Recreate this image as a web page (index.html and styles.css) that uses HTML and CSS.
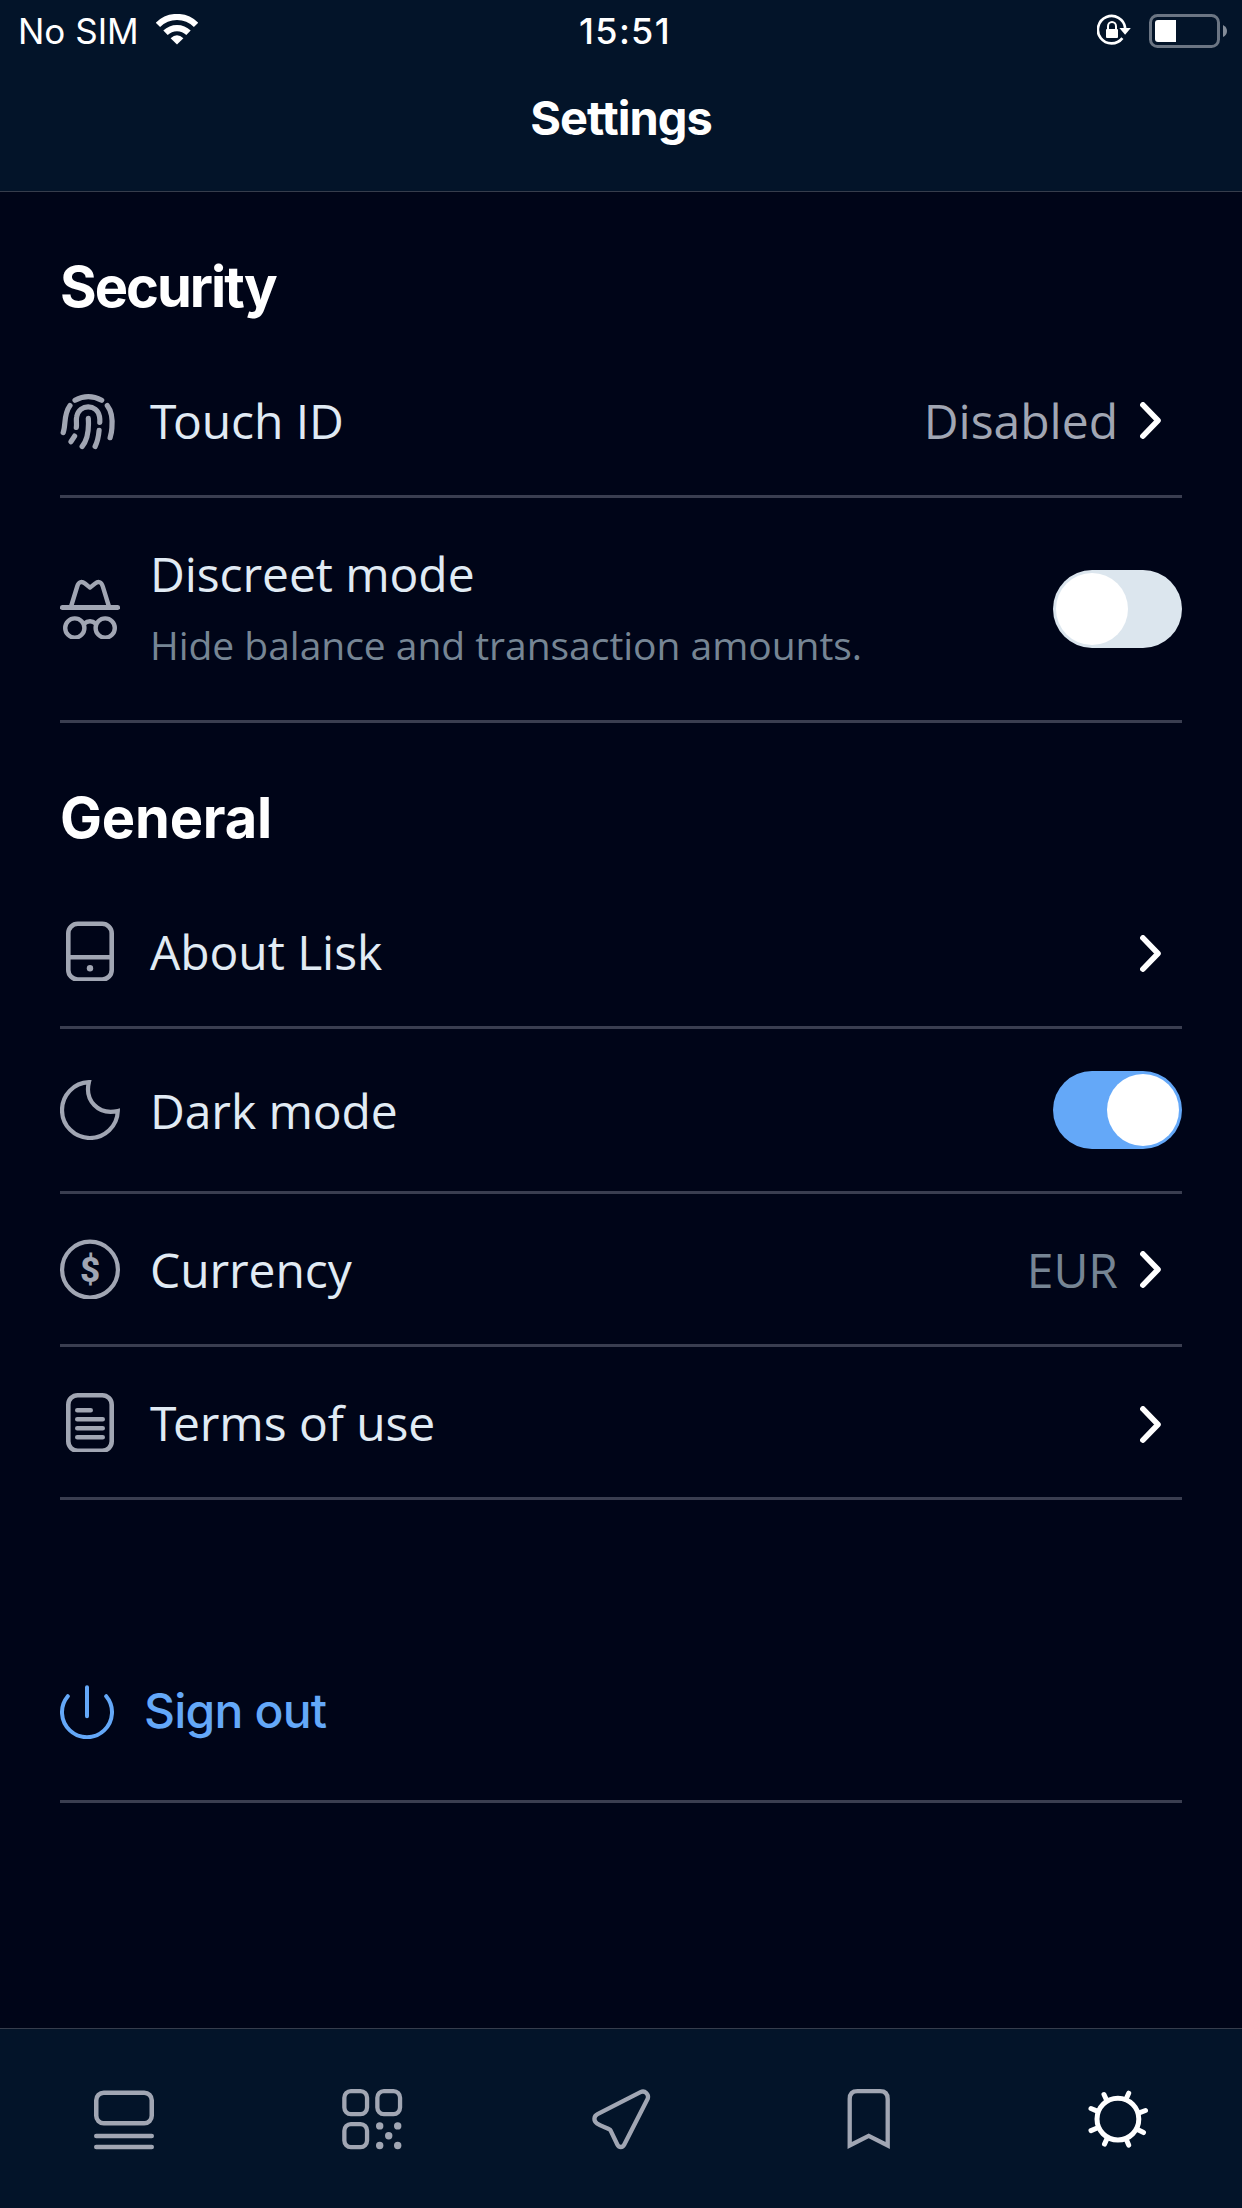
FILE: index.html
```html
<!DOCTYPE html>
<html lang="en">
<head>
<meta charset="utf-8">
<title>Settings</title>
<link rel="stylesheet" href="styles.css">
</head>
<body>
<div class="screen">
  <header class="header">
    <div class="status">
      <div class="status-left">
        <span class="carrier">No SIM</span>
        <svg class="wifi" width="42" height="31" viewBox="0 0 42 31" fill="none" stroke="currentColor">
          <path d="M1.9 10.9A27 27 0 0 1 40.1 10.9" stroke-width="6.2"/>
          <path d="M9.5 18.8A16.3 16.3 0 0 1 32.5 18.8" stroke-width="6.2"/>
          <path d="M14.6 24.2Q21 18.4 27.4 24.2L21 30.4Z" fill="currentColor" stroke="none"/>
        </svg>
      </div>
      <span class="clock">15:51</span>
      <div class="status-right">
        <svg class="lock" width="36" height="32" viewBox="0 0 36 32" fill="none" stroke="currentColor">
          <path d="M28.2 14A13.7 13.7 0 1 0 25.4 24.2" stroke-width="2.7"/>
          <path d="M22.4 14h11.4l-5.7 6.7z" fill="currentColor" stroke="none"/>
          <rect x="9" y="15" width="12" height="9" rx="1" fill="currentColor" stroke="none"/>
          <path d="M11 15.5v-3.2a4 4.3 0 0 1 8 0v3.2" stroke-width="2"/>
        </svg>
        <svg class="battery" width="78" height="34" viewBox="0 0 78 34" fill="none">
          <rect x="1.5" y="1.5" width="68" height="31" rx="7" stroke="#6b7583" stroke-width="3"/>
          <path d="M74 11q4 2 4 6t-4 6z" fill="#848c98"/>
          <path d="M9 6h18v22H9q-3 0-3-3V9q0-3 3-3z" fill="#fff"/>
        </svg>
      </div>
    </div>
    <h1 class="title">Settings</h1>
  </header>

  <main class="content">
    <section>
      <h2 class="section-title section-title-security">Security</h2>
      <div class="row">
        <svg class="icon" viewBox="0 0 60 60" fill="none" stroke="currentColor" stroke-width="5.2" stroke-linecap="round">
          <path d="M15 10.3Q28.3 2.8 41.7 10.3"/>
          <path d="M10 15.6C3.2 25 6.2 34 3.2 42.6"/>
          <path d="M47.3 15.6Q53.2 23 51.9 38Q51.6 43 50.1 47.7"/>
          <path d="M16.3 37.4C17 34 15.8 30 16.7 26.6C19.3 13.8 37 13.5 39.5 26.6Q40 29.5 39.8 32.4"/>
          <path d="M28.3 28.4C29 39 28.5 49 22.1 56.5"/>
          <path d="M39.1 40.4Q38.3 50 35.1 56.5"/>
          <path d="M14.6 46.1L11 51.7"/>
        </svg>
        <span class="label"><span class="kern">T</span>ouch ID</span>
        <span class="value value-state">Disabled</span>
        <svg class="chevron" viewBox="0 0 21 37"><path d="M2.9 2.9L18 18.5L2.9 34.1"/></svg>
      </div>
      <div class="row row-tall">
        <svg class="icon" viewBox="0 0 60 60" fill="none" stroke="currentColor" stroke-width="4.4" stroke-linecap="round" stroke-linejoin="round">
          <path d="M2.4 28.4H57.6" stroke-width="5"/>
          <path d="M11.2 27L17.2 7.5C18.6 2.6 21.6 2 25 4.6L30 8.6L35 4.6C38.4 2 41.4 2.6 42.8 7.5L48.8 27"/>
          <circle cx="14.8" cy="49" r="9.6"/>
          <circle cx="45.2" cy="49" r="9.6"/>
          <path d="M24 44.7Q30 39.7 36 44.7"/>
        </svg>
        <div class="copy">
          <span class="label">Discreet mode</span>
          <span class="hint">Hide balance and transaction amounts.</span>
        </div>
        <span class="toggle"></span>
      </div>
    </section>

    <section>
      <h2 class="section-title section-title-general">General</h2>
      <div class="row">
        <svg class="icon" viewBox="0 0 60 60" fill="none" stroke="currentColor" stroke-width="4.6">
          <rect x="8.3" y="2.8" width="43.4" height="55.7" rx="9.5"/>
          <path d="M8 36.2H52"/>
          <circle cx="30" cy="47.2" r="3.2" fill="currentColor" stroke="none"/>
        </svg>
        <span class="label">About Lisk</span>
        <svg class="chevron chevron-alone" viewBox="0 0 21 37"><path d="M2.9 2.9L18 18.5L2.9 34.1"/></svg>
      </div>
      <div class="row row-dark">
        <svg class="icon" viewBox="0 0 60 60" fill="none" stroke="currentColor" stroke-width="4.2">
          <path d="M28.9 2.2A27.9 27.9 0 1 0 57.8 31C38 35.5 24.5 20 28.9 2.2Z"/>
        </svg>
        <span class="label">Dark mode</span>
        <span class="toggle toggle-on"></span>
      </div>
      <div class="row">
        <svg class="icon" viewBox="0 0 60 60" fill="none" stroke="currentColor" stroke-width="4.2">
          <circle cx="30" cy="30.6" r="27.9"/>
          <text class="dollar" x="30.2" y="43.2" text-anchor="middle">$</text>
        </svg>
        <span class="label">Currency</span>
        <span class="value">EUR</span>
        <svg class="chevron" viewBox="0 0 21 37"><path d="M2.9 2.9L18 18.5L2.9 34.1"/></svg>
      </div>
      <div class="row">
        <svg class="icon" viewBox="0 0 60 60" fill="none" stroke="currentColor" stroke-width="4.6" stroke-linecap="round">
          <rect x="8.3" y="3.2" width="43.4" height="55.6" rx="9.5"/>
          <path d="M17.3 18.3H30.7M17.3 27.3H42.7M17.3 36.3H42.7M17.3 45.3H42.7"/>
        </svg>
        <span class="label"><span class="kern">T</span>erms of use</span>
        <svg class="chevron chevron-alone" viewBox="0 0 21 37"><path d="M2.9 2.9L18 18.5L2.9 34.1"/></svg>
      </div>
    </section>

    <div class="row row-signout">
      <svg class="power" viewBox="0 0 54 54" fill="none" stroke="currentColor" stroke-width="4" stroke-linecap="round">
        <path d="M27 2.2V31.2M7.8 11.2A25 25 0 1 0 46.2 11.2"/>
      </svg>
      <span class="signout">Sign out</span>
    </div>
  </main>

  <nav class="tabs">
    <div class="tab">
      <svg class="icon" viewBox="0 0 60 60" fill="none" stroke="currentColor" stroke-width="4.5" stroke-linecap="round">
        <rect x="2.25" y="3.75" width="55.5" height="30.5" rx="7.5"/>
        <path d="M2.25 47H57.75M2.25 58H57.75"/>
      </svg>
    </div>
    <div class="tab">
      <svg class="icon" viewBox="0.8 0 60 60" fill="none" stroke="currentColor" stroke-width="4.3">
        <rect x="2.15" y="2.15" width="22.7" height="22.9" rx="6.5"/>
        <rect x="35.15" y="2.15" width="22.7" height="22.9" rx="6.5"/>
        <rect x="2.15" y="35.15" width="22.7" height="22.9" rx="6.5"/>
        <g fill="currentColor" stroke="none">
          <circle cx="37.5" cy="36.9" r="3.7"/><circle cx="55.5" cy="36.9" r="3.7"/>
          <circle cx="46.5" cy="46.8" r="3.7"/>
          <circle cx="37.5" cy="56.5" r="3.7"/><circle cx="55.5" cy="56.5" r="3.7"/>
        </g>
      </svg>
    </div>
    <div class="tab">
      <svg class="icon" viewBox="0 0 60 60" fill="none" stroke="currentColor" stroke-width="4.3" stroke-linejoin="round">
        <path d="M49.5 3.2L6.5 25.2C2.6 27.2 2.4 32 6 34.5C10.5 37.5 15 38.6 19.3 40.8L26.3 55.5C27.8 58.8 31.7 58.8 33.3 55.5L56.8 9.5C58 5.5 54 .9 49.5 3.2Z"/>
      </svg>
    </div>
    <div class="tab">
      <svg class="icon" viewBox="0 0 60 60" fill="none" stroke="currentColor" stroke-width="4.3">
        <path d="M10.7 56.4V10Q10.7 2.2 18.5 2.2H41Q48.7 2.2 48.7 10V56.4L29.7 46.9Z"/>
      </svg>
    </div>
    <div class="tab tab-active">
      <svg class="icon" viewBox="0 0 60 60" fill="none" stroke="currentColor" stroke-width="5" stroke-linecap="round">
        <circle cx="29.9" cy="30.1" r="20.9"/>
        <path d="M37.9 10.5L40.7 4.2M50.5 24.2L57.5 21.5M49.5 40.6L55.5 43.6M38 49.8L40.7 56.1M19.4 48.8L16.5 55.1M9.8 38.8L3 41.6M9.8 22.4L3 19.5M18.9 11.7L16 5.5"/>
      </svg>
    </div>
  </nav>
</div>
</body>
</html>
```
FILE: styles.css
```css
* { box-sizing: border-box; }

body {
  margin: 0;
  background: #000518;
  color: #e1ebf4;
  font-family: "Open Sans", "Noto Sans", sans-serif;
}

svg { display: block; flex: none; }

.screen {
  display: flex;
  flex-direction: column;
  height: 2208px;
}

.header {
  height: 192px;
  background: #031429;
  border-bottom: 1px solid #363d4c;
  color: #fff;
  font-family: Inter, sans-serif;
}

.status {
  display: grid;
  grid-template-columns: 1fr auto 1fr;
  align-items: center;
  height: 60px;
  padding: 0 15px 0 18px;
}

.status-left, .status-right { display: flex; align-items: center; }
.status-left { gap: 17px; }
.status-right { justify-content: flex-end; gap: 16px; }

.carrier { font-size: 35px; line-height: 60px; padding-top: 1px; }
.clock { font-size: 36px; line-height: 60px; font-weight: 500; letter-spacing: 1.3px; padding: 1px 0 0 5px; }
.lock, .wifi { margin-bottom: 2px; }

.title {
  margin: 26px 0 0;
  font-size: 47px;
  line-height: 64px;
  font-weight: 700;
  letter-spacing: -1px;
  text-align: center;
}

.content { flex: 1; padding: 0 60px; }

.section-title {
  margin: 0;
  height: 153px;
  padding-top: 60px;
  color: #fff;
  font-family: Inter, sans-serif;
  font-size: 56px;
  line-height: 70px;
  font-weight: 700;
}

.section-title-security { letter-spacing: -2px; }
.section-title-general { letter-spacing: -0.2px; }

.row {
  display: flex;
  align-items: center;
  height: 153px;
  border-bottom: 3px solid #3a3e50;
}

.row-tall { height: 225px; }
.row-dark { height: 165px; }

.icon { width: 60px; height: 60px; color: #a1a6b3; }

.row > .icon { margin-right: 30px; }

.label {
  flex: 1;
  font-size: 48px;
  line-height: 65px;
  letter-spacing: -0.08px;
}

.kern { letter-spacing: -3.5px; }

.copy {
  flex: 1;
  display: flex;
  flex-direction: column;
  gap: 12px;
  padding-bottom: 7px;
}

.hint { color: #768594; font-size: 39px; line-height: 53px; letter-spacing: -0.03px; }

.value { margin-right: 22px; color: #768594; font-size: 48px; line-height: 65px; }
.value-state { color: #a1a6b3; }

.chevron {
  width: 21px;
  height: 37px;
  margin-right: 21px;
  fill: none;
  stroke: #fff;
  stroke-width: 5.6;
  stroke-linecap: round;
  stroke-linejoin: round;
}

.chevron-alone { margin-top: 5px; }

.toggle {
  width: 129px;
  height: 78px;
  padding: 3px;
  border-radius: 39px;
  background: #dce6ee;
}

.toggle::before {
  content: "";
  display: block;
  width: 72px;
  height: 72px;
  border-radius: 50%;
  background: #fff;
}

.toggle-on { background: #64a8f8; }
.toggle-on::before { margin-left: auto; }

.dollar {
  fill: currentColor;
  stroke: none;
  font: 800 35px Roboto, sans-serif;
}

.row-signout {
  height: 179px;
  margin-top: 124px;
  color: #64a8f8;
}

.power { width: 54px; height: 54px; margin-right: 30px; }

.signout { font-family: Inter, sans-serif; font-size: 48px; line-height: 60px; font-weight: 500; letter-spacing: -0.8px; padding-bottom: 3px; }

.tabs {
  display: flex;
  height: 180px;
  background: #031429;
  border-top: 1px solid #363d4c;
}

.tab { flex: 1; display: flex; align-items: center; justify-content: center; }
.tab-active .icon { color: #fff; }
.tabs .icon { overflow: visible; }
```
